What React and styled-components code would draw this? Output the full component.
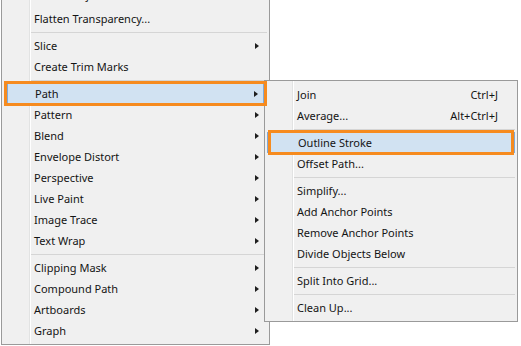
import React from "react";
import styled, { createGlobalStyle } from "styled-components";

const Global = createGlobalStyle`
  html, body { margin: 0; padding: 0; background: #ffffff; }
  body { width: 521px; height: 346px; overflow: hidden; }
  #root { position: relative; width: 521px; height: 346px; overflow: hidden; }
`;

const Stage = styled.div`
  position: relative;
  width: 521px;
  height: 346px;
  overflow: hidden;
  padding-top: 1px;
  box-sizing: border-box;
  font-family: "Noto Sans", "Liberation Sans", Arial, sans-serif;
  font-size: 11px;
  color: #141414;
`;

const Menu = styled.div`
  box-sizing: border-box;
  display: flex;
  flex-direction: column;
  width: ${(p) => p.$width}px;
  padding: 3px 0;
  border: 1px solid #9a9a9a;
  background: linear-gradient(
    to right,
    #f0f0f0 27px,
    #e2e3e3 27px,
    #e2e3e3 28px,
    #ffffff 28px,
    #ffffff 29px,
    #f0f0f0 29px
  );
`;

const MainMenu = styled(Menu)`
  margin: -24px 0 0 1px;
`;

const SubMenu = styled(Menu)`
  position: absolute;
  left: 264px;
  top: 80px;
  z-index: 1;
`;

const Item = styled.div`
  position: relative;
  box-sizing: border-box;
  flex: none;
  height: ${(p) => p.$h || 21}px;
  display: flex;
  align-items: center;
  padding: 0 ${(p) => p.$padRight}px 0 32px;
  white-space: nowrap;
  line-height: ${(p) => p.$h || 21}px;
  z-index: ${(p) => (p.$active ? 2 : "auto")};
  ${(p) =>
    p.$active &&
    `
    margin: 0 ${p.$mr}px 0 ${p.$ml}px;
    padding-left: ${32 - p.$ml}px;
    padding-right: ${p.$padRight - p.$mr}px;
    background: #d1e2f2;
    border: 1px solid #7fa9d9;
    &::after {
      content: "";
      position: absolute;
      top: -3px;
      bottom: -3px;
      left: ${p.$ol}px;
      right: ${p.$or}px;
      border: 3px solid #f68b1f;
      pointer-events: none;
    }
  `}
`;

const Label = styled.span`
  flex: 1;
`;

const Shortcut = styled.span`
  color: #141414;
`;

const Arrow = styled.span`
  width: 0;
  height: 0;
  border-left: 4px solid #1e1e1e;
  border-top: 3.5px solid transparent;
  border-bottom: 3.5px solid transparent;
`;

const Separator = styled.div`
  box-sizing: border-box;
  flex: none;
  height: 6px;
  padding: 3px 2px 0 29px;
  &::before {
    content: "";
    display: block;
    height: 1px;
    background: #d5d5d5;
  }
`;

const mainItems = [
  { label: "Create Object Mosaic...", h: 27 },
  { label: "Flatten Transparency..." },
  { sep: true },
  { label: "Slice", sub: true },
  { label: "Create Trim Marks" },
  { sep: true },
  { label: "Path", sub: true, active: true },
  { label: "Pattern", sub: true },
  { label: "Blend", sub: true },
  { label: "Envelope Distort", sub: true },
  { label: "Perspective", sub: true },
  { label: "Live Paint", sub: true },
  { label: "Image Trace", sub: true },
  { label: "Text Wrap", sub: true },
  { sep: true },
  { label: "Clipping Mask", sub: true },
  { label: "Compound Path", sub: true },
  { label: "Artboards", sub: true },
  { label: "Graph", sub: true },
];

const pathItems = [
  { label: "Join", key: "Ctrl+J" },
  { label: "Average...", key: "Alt+Ctrl+J" },
  { sep: true },
  { label: "Outline Stroke", active: true },
  { label: "Offset Path..." },
  { sep: true },
  { label: "Simplify..." },
  { label: "Add Anchor Points" },
  { label: "Remove Anchor Points" },
  { label: "Divide Objects Below" },
  { sep: true },
  { label: "Split Into Grid..." },
  { sep: true },
  { label: "Clean Up..." },
];

export default function App() {
  return (
    <Stage>
      <Global />
      <MainMenu $width={269}>
        {mainItems.map((it, i) =>
          it.sep ? (
            <Separator key={i} />
          ) : (
            <Item
              key={i}
              $h={it.h}
              $padRight={10}
              $active={it.active}
              $ml={5}
              $mr={5}
              $ol={-4}
              $or={-4}
            >
              <Label>{it.label}</Label>
              {it.sub && <Arrow />}
            </Item>
          )
        )}
      </MainMenu>
      <SubMenu $width={254}>
        {pathItems.map((it, i) =>
          it.sep ? (
            <Separator key={i} />
          ) : (
            <Item
              key={i}
              $padRight={19}
              $active={it.active}
              $ml={2}
              $mr={2}
              $ol={0}
              $or={0}
            >
              <Label>{it.label}</Label>
              {it.key && <Shortcut>{it.key}</Shortcut>}
            </Item>
          )
        )}
      </SubMenu>
    </Stage>
  );
}
